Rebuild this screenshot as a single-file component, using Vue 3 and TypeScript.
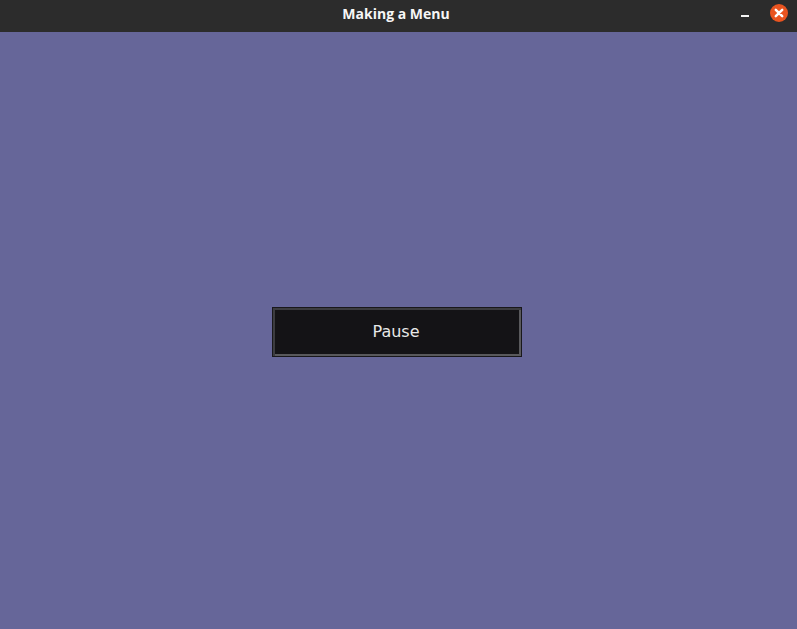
<script setup lang="ts">
const title = 'Making a Menu';
const buttonLabel = 'Pause';
</script>

<template>
  <div class="window">
    <header class="titlebar">
      <span class="title">{{ title }}</span>
      <div class="controls">
        <button class="minimize" aria-label="Minimize">
          <span class="minimize-bar"></span>
        </button>
        <button class="close" aria-label="Close">
          <svg viewBox="0 0 18 18" width="18" height="18">
            <path d="M5.8 5.8l6.4 6.4M12.2 5.8l-6.4 6.4" stroke="#fff" stroke-width="2.5" stroke-linecap="round" fill="none" />
          </svg>
        </button>
      </div>
    </header>
    <main class="content">
      <button class="menu-button">{{ buttonLabel }}</button>
    </main>
  </div>
</template>

<style>
html,
body {
  margin: 0;
  background: #666699;
}
</style>

<style scoped>
.window {
  display: flex;
  flex-direction: column;
  width: 797px;
  height: 629px;
  overflow: hidden;
  background: #666699;
}

.titlebar {
  display: flex;
  align-items: center;
  justify-content: center;
  position: relative;
  height: 32px;
  flex-shrink: 0;
  background: #2c2c2c;
}

.title {
  font-family: "Open Sans", "Noto Sans", sans-serif;
  font-size: 14px;
  font-weight: 700;
  color: #f6f6f6;
  margin-right: 5px;
  margin-bottom: 5px;
}

.controls {
  position: absolute;
  top: 4px;
  right: 9px;
  display: flex;
  align-items: center;
  gap: 21px;
}

.controls button {
  padding: 0;
  border: none;
  background: none;
}

.minimize {
  display: flex;
  align-items: center;
  justify-content: center;
  width: 8px;
  height: 18px;
}

.minimize-bar {
  display: block;
  width: 8px;
  height: 2px;
  margin-top: 6px;
  background: #f4f4f4;
}

.controls .close {
  display: flex;
  width: 18px;
  height: 18px;
  border-radius: 50%;
  background: #e95420;
}

.content {
  flex: 1;
  display: flex;
  align-items: center;
  justify-content: center;
  padding: 3px 3px 0 0;
}

.menu-button {
  box-sizing: border-box;
  width: 250px;
  height: 50px;
  padding: 0 2px 2px 0;
  border: 1px solid #19181b;
  background: #141316;
  box-shadow: inset 2px 2px 0 #3c3c40, inset -2px -2px 0 #59595c;
  font-family: "DejaVu Sans", sans-serif;
  font-size: 16px;
  color: #e8e8e8;
}
</style>
